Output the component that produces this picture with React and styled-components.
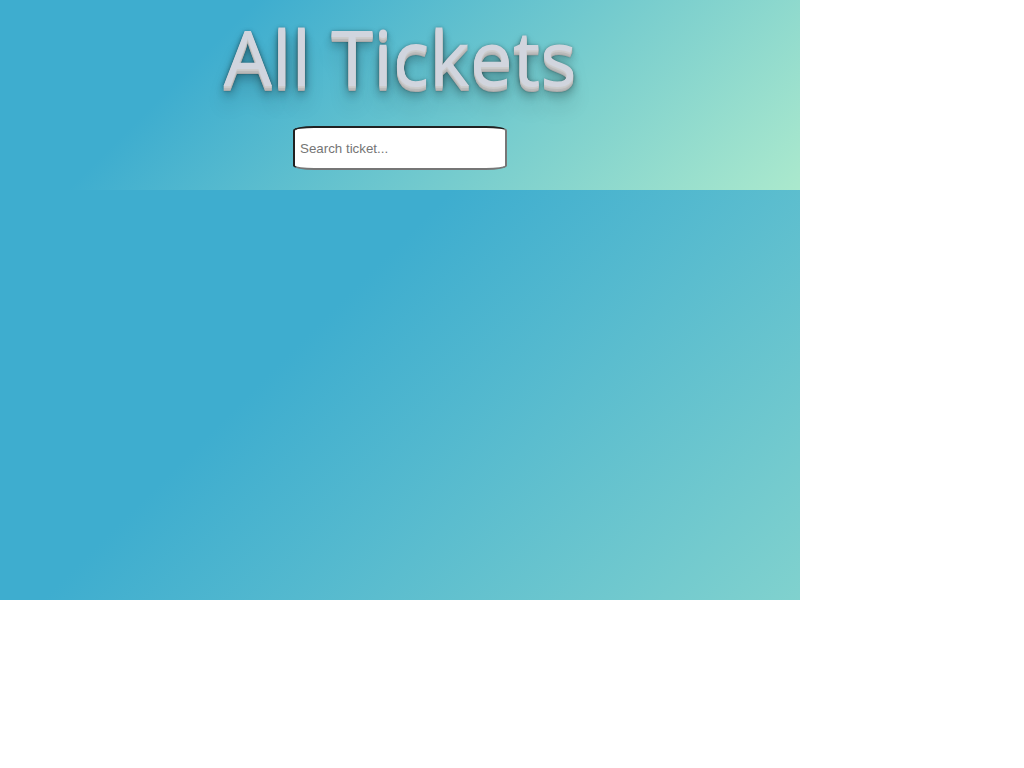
import React from "react";
import styled, { createGlobalStyle } from "styled-components";

const GlobalStyle = createGlobalStyle`
  body {
    margin: 0;
    background: #ffffff;
    font-family: "Noto Sans", "Open Sans", sans-serif;
  }
`;

const Page = styled.div`
  box-sizing: border-box;
  width: 100%;
  max-width: 800px;
  min-height: 600px;
  background: #3eadcf linear-gradient(315deg, #abe9cd 0%, #3eadcf 66%) no-repeat top left / 100% 1090px;
`;

const Header = styled.header`
  box-sizing: border-box;
  display: flex;
  flex-direction: column;
  align-items: center;
  padding-bottom: 20px;
  background: linear-gradient(315deg, #abe9cd 0%, #3eadcf 74%);
`;

const Title = styled.h1`
  margin: 0;
  padding-bottom: 12px;
  font-size: 76px;
  line-height: 114px;
  font-weight: 400;
  color: #d1d5de;
  text-shadow:
    0 1px 0 #cccccc,
    0 2px 0 #c9c9c9,
    0 3px 0 #bbbbbb,
    0 4px 0 #b9b9b9,
    0 5px 0 #aaaaaa,
    0 6px 1px rgba(0, 0, 0, 0.1),
    0 0 5px rgba(0, 0, 0, 0.1),
    0 1px 3px rgba(0, 0, 0, 0.3),
    0 3px 5px rgba(0, 0, 0, 0.2),
    0 5px 10px rgba(0, 0, 0, 0.25),
    0 10px 10px rgba(0, 0, 0, 0.2),
    0 20px 20px rgba(0, 0, 0, 0.15);
`;

const SearchInput = styled.input`
  box-sizing: border-box;
  width: 214px;
  height: 44px;
  padding: 1px 5px;
  border: 2px inset #767676;
  border-radius: 10%;
  background: #ffffff;
  font-family: "Liberation Sans", Arial, sans-serif;

  &::placeholder {
    color: #757575;
  }
`;

export default function App() {
  return (
    <>
      <GlobalStyle />
      <Page>
        <Header>
          <Title>All Tickets</Title>
          <SearchInput type="search" aria-label="Search ticket" placeholder="Search ticket..." />
        </Header>
      </Page>
    </>
  );
}
